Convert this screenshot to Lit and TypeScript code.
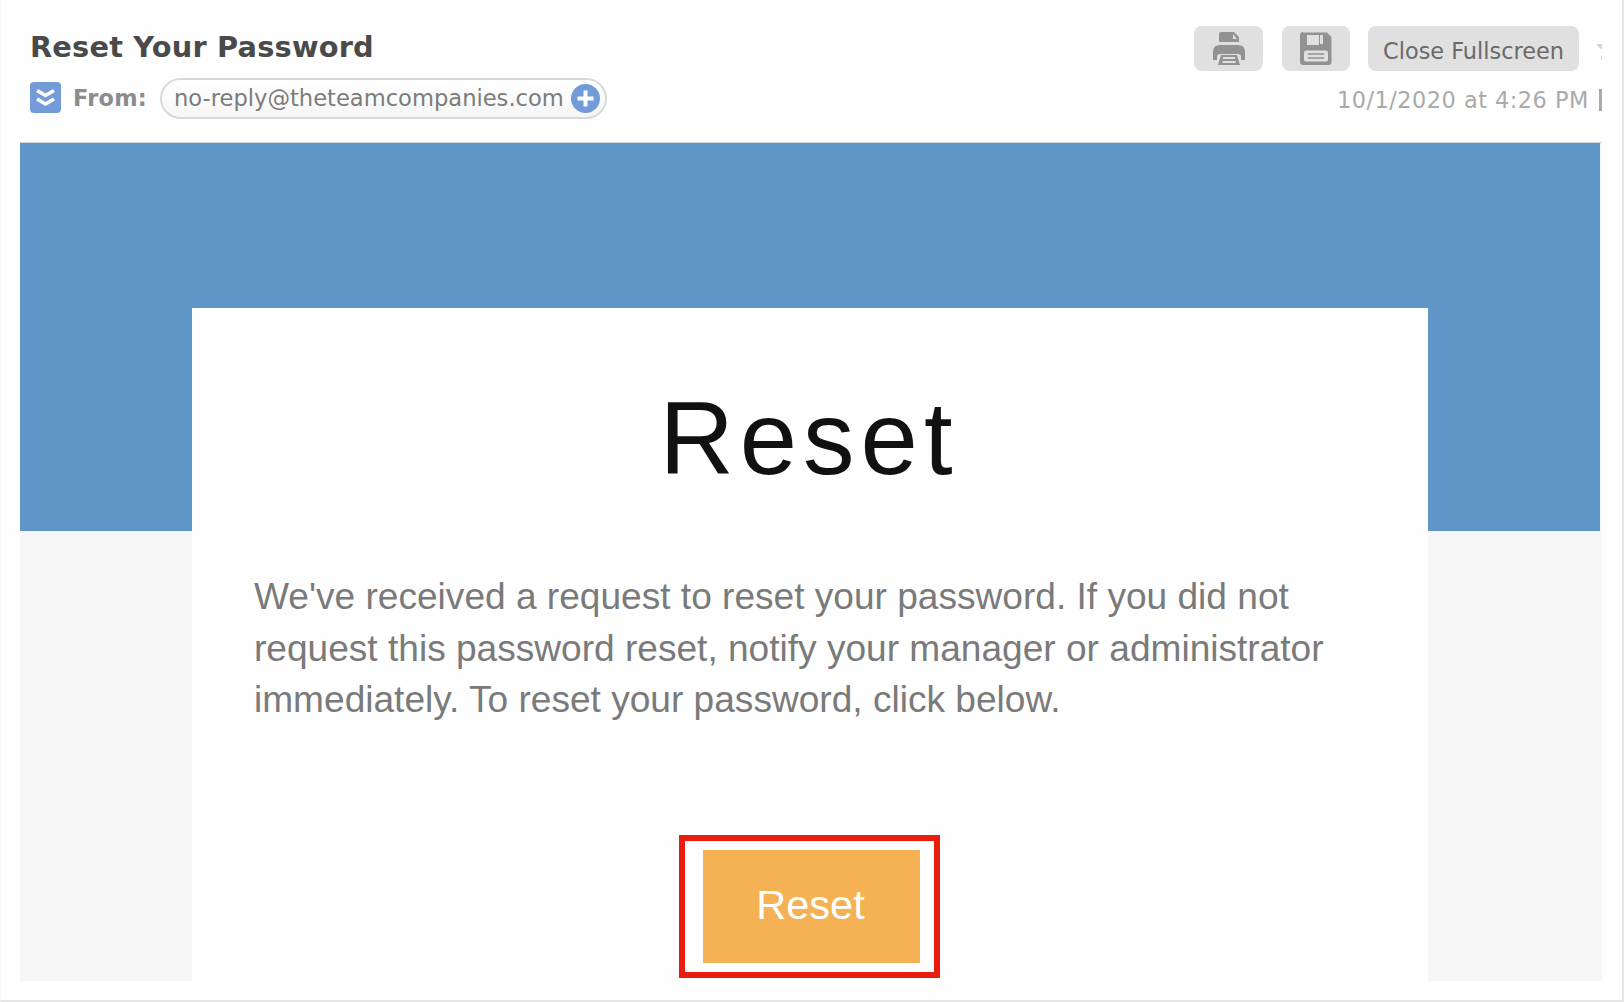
import { LitElement, html, css } from "lit";
import { customElement, property } from "lit/decorators.js";

@customElement("mail-header")
export class MailHeader extends LitElement {
  @property() subject = "";
  @property() sender = "";
  @property() date = "";

  static styles = css`
    :host {
      display: flex;
      justify-content: space-between;
      height: 142px;
      box-sizing: border-box;
      overflow: hidden;
      font-family: "DejaVu Sans", Verdana, sans-serif;
    }

    .left {
      padding: 30px 0 0 10px;
    }

    .subject {
      margin: 0;
      font-size: 28.8px;
      line-height: 34px;
      font-weight: bold;
      letter-spacing: 0.2px;
      color: #4a4a4a;
      white-space: nowrap;
    }

    .from {
      display: flex;
      align-items: center;
      height: 42px;
      margin-top: 13px;
    }

    .expand {
      display: block;
      width: 31px;
      height: 31px;
      margin-top: -2px;
    }

    .label {
      margin-left: 12px;
      width: 87px;
      font-size: 22.4px;
      font-weight: bold;
      letter-spacing: 0.3px;
      color: #8c8c8c;
    }

    .pill {
      display: flex;
      align-items: center;
      box-sizing: border-box;
      width: 447px;
      height: 41px;
      padding: 0 5px 0 12px;
      justify-content: space-between;
      border: 2px solid #d9d9d9;
      border-radius: 21px;
      background: linear-gradient(#fff, #f6f6f6);
      font-size: 22.6px;
      color: #7c7c7c;
      white-space: nowrap;
    }

    .add {
      display: block;
      width: 29px;
      height: 29px;
    }

    .right {
      width: 408px;
      padding-top: 26px;
    }

    .actions {
      display: flex;
      height: 45px;
    }

    .button {
      display: flex;
      flex: none;
      align-items: center;
      justify-content: center;
      box-sizing: border-box;
      width: 68px;
      margin-right: 18px;
      border-radius: 8px;
      background: #e0e0e0;
    }

    .print {
      width: 69px;
      margin-right: 19px;
    }

    .close {
      width: 211px;
      padding: 4px 0 0 0;
      font-size: 22.4px;
      color: #6a6a6a;
      white-space: nowrap;
    }

    .star {
      flex: none;
      width: 24px;
      height: 24px;
      margin-top: 10px;
    }

    .date {
      display: flex;
      justify-content: space-between;
      margin-top: 16px;
      padding-left: 143px;
      font-size: 22.4px;
      line-height: 26px;
      letter-spacing: 0.5px;
      color: #aaa;
      white-space: nowrap;
    }

    .divider {
      width: 3px;
      height: 22px;
      margin-top: 2px;
      background: #aaa;
    }
  `;

  render() {
    return html`
      <div class="left">
        <h1 class="subject">${this.subject}</h1>
        <div class="from">
          <svg class="expand" viewBox="0 0 31 31">
            <rect width="31" height="31" rx="4" fill="#739bd8" />
            <path
              d="M7 8.5l8.5 5 8.5-5M7 17l8.5 5 8.5-5"
              fill="none"
              stroke="#fff"
              stroke-width="3.6"
            />
          </svg>
          <span class="label">From:</span>
          <span class="pill">
            ${this.sender}
            <svg class="add" viewBox="0 0 29 29">
              <circle cx="14.5" cy="14.5" r="14.5" fill="#739bd8" />
              <path
                d="M14.5 6.5v16M6.5 14.5h16"
                stroke="#fff"
                stroke-width="4"
              />
            </svg>
          </span>
        </div>
      </div>
      <div class="right">
        <div class="actions">
          <span class="button print">
            <svg width="34" height="34" viewBox="0 0 34 34">
              <path
                d="M9 0h13l5 5v5H7V2q0-2 2-2zM1 28V20q0-7 7-7h18q7 0 7 7v8h-4v-3q0-3-3-3H8q-3 0-3 3v3z"
                fill="#929292"
              />
              <path d="M21 2l4 5h-4z" fill="#e0e0e0" />
              <path d="M9 23h16l3 10H6z" fill="#929292" />
              <path
                d="M11 26h12M10.5 30h13"
                stroke="#e0e0e0"
                stroke-width="2"
              />
            </svg>
          </span>
          <span class="button">
            <svg width="32" height="34" viewBox="0 0 32 34">
              <path
                d="M3 .5h24l4.5 4.5v25q0 3-3 3H3q-3 0-3-3v-27q0-3 3-3z"
                fill="#929292"
              />
              <path d="M7 3h12v10H7zM20 3h3v9h-3z" fill="#e0e0e0" />
              <rect x="4" y="18.5" width="24" height="11" rx="2" fill="#e0e0e0" />
              <path
                d="M8 22h16M8 26h16"
                stroke="#929292"
                stroke-width="1.5"
              />
            </svg>
          </span>
          <span class="button close">Close Fullscreen</span>
          <svg class="star" viewBox="0 0 24 24">
            <path
              d="M12 2l3 7h8l-6 5 2 8-7-4.5-7 4.5 2-8-6-5h8z"
              fill="none"
              stroke="#d4d4d4"
              stroke-width="2"
            />
          </svg>
        </div>
        <div class="date">
          <span>${this.date}</span>
          <span class="divider"></span>
        </div>
      </div>
    `;
  }
}

@customElement("app-root")
export class AppRoot extends LitElement {
  static styles = css`
    :host {
      display: block;
      box-sizing: border-box;
      width: 1624px;
      height: 1002px;
      padding: 0 20px 0 19px;
      border: solid #e6e6e6;
      border-width: 0 2px 2px 0;
      border-left: 1px solid #f7f7f7;
      background: #fefefe;
      overflow: hidden;
    }

    .message {
      display: flex;
      justify-content: center;
      box-sizing: border-box;
      width: 1582px;
      height: 839px;
      padding-top: 165px;
      padding-right: 2px;
      border-top: 1px solid #cfd5db;
      background: linear-gradient(#6095c8, #6095c8) 0 0 / 1580px 388px no-repeat
        #f6f6f6;
      font-family: "Liberation Sans", Arial, sans-serif;
    }

    .card {
      display: flex;
      flex-direction: column;
      align-items: center;
      box-sizing: border-box;
      width: 1236px;
      height: 673px;
      padding: 73px 62px 0;
      background: #fefefe;
    }

    .title {
      margin: 0 2px 0 0;
      font-size: 103px;
      line-height: 116px;
      font-weight: normal;
      letter-spacing: 6px;
      color: #111;
    }

    .text {
      align-self: stretch;
      margin: 74px 0 0;
      font-size: 37.08px;
      line-height: 51.5px;
      color: #7a7a7a;
      white-space: nowrap;
    }

    .highlight {
      box-sizing: border-box;
      width: 261px;
      height: 143px;
      margin: 109px 2px 0 0;
      padding: 9px 14px 9px 18px;
      border: 6px solid #ea1c0d;
    }

    .reset {
      display: flex;
      align-items: center;
      justify-content: center;
      box-sizing: border-box;
      width: 217px;
      height: 113px;
      padding: 0 1px 2px 0;
      background: #f4b254;
      font-size: 41.5px;
      color: #fff;
    }
  `;

  render() {
    return html`
      <mail-header
        subject="Reset Your Password"
        sender="no-reply@theteamcompanies.com"
        date="10/1/2020 at 4:26 PM"
      ></mail-header>
      <div class="message">
        <div class="card">
          <h2 class="title">Reset</h2>
          <p class="text">
            We've received a request to reset your password. If you did not<br />
            request this password reset, notify your manager or administrator<br />
            immediately. To reset your password, click below.
          </p>
          <div class="highlight"><div class="reset">Reset</div></div>
        </div>
      </div>
    `;
  }
}

declare global {
  interface HTMLElementTagNameMap {
    "mail-header": MailHeader;
    "app-root": AppRoot;
  }
}
